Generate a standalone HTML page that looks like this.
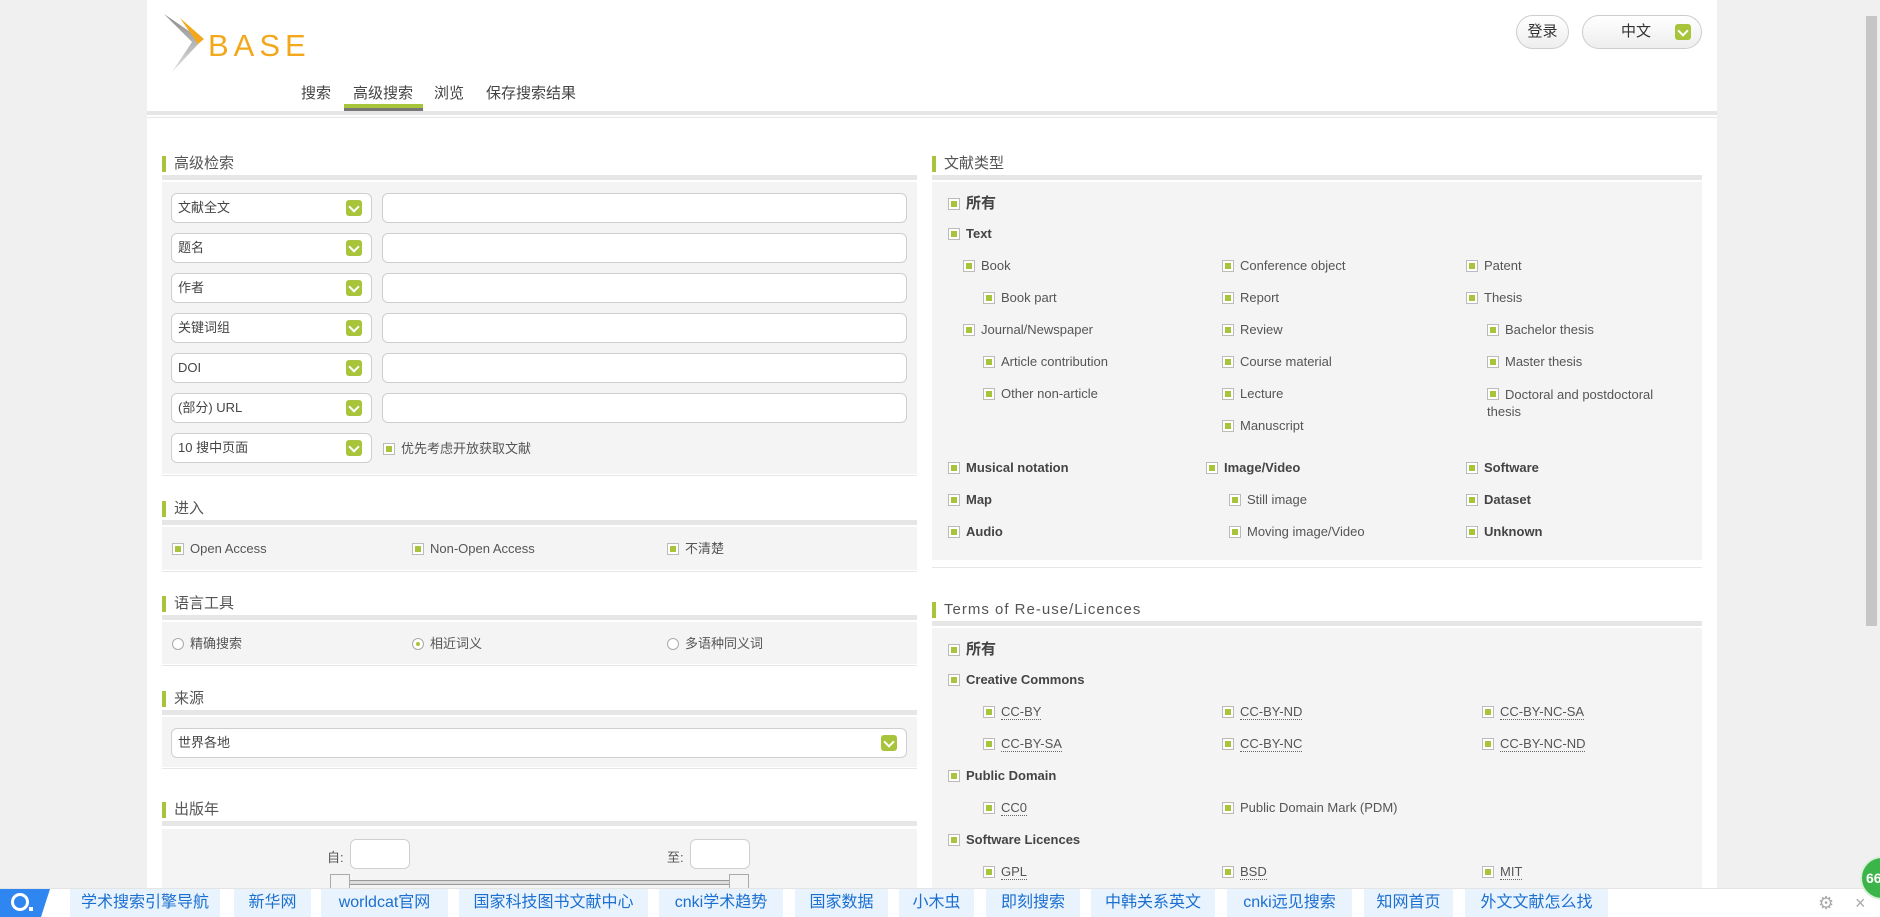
<!DOCTYPE html>
<html><head><meta charset="utf-8">
<style>
*{margin:0;padding:0;box-sizing:border-box}
body{width:1880px;height:917px;overflow:hidden;background:#f0f0f0;font-family:"Liberation Sans","Noto Sans CJK SC",sans-serif;font-size:13px;color:#555;position:relative}
.a{position:absolute}
#main{left:147px;top:0;width:1570px;height:917px;background:#fff}
.hdr{font-size:15px;color:#555;padding-left:8px;border-left:4px solid #a8c43a;line-height:16px;height:16px}
.bar{height:5px;background:#e6e6e6}
.pan{background:#f4f4f4}
.sel{background:#fff;border:1px solid #cfcfcf;border-radius:6px;height:30px;line-height:28px;padding-left:6px;font-size:13px;color:#444}
.arr{position:absolute;right:9px;top:6px;width:16px;height:16px;background:#a8c43a;border-radius:3px}
.arr:after{content:"";position:absolute;left:4px;top:3px;width:6px;height:6px;border-right:2px solid #fff;border-bottom:2px solid #fff;transform:rotate(45deg)}
.inp{background:#fff;border:1px solid #cfcfcf;border-radius:6px;height:30px}
.cb{position:absolute;width:12px;height:12px;border:1px solid #bbb;background:#fff}
.cb:after{content:"";position:absolute;left:2px;top:2px;width:6px;height:6px;background:#a8c43a}
.it{position:absolute;font-size:13px;color:#555;white-space:nowrap;line-height:16px}
.it .cb{left:0;top:2px}
.it span{margin-left:18px}
.b{font-weight:bold;color:#444}
.u span{border-bottom:1px dotted #666}
.rd{position:absolute;left:0;top:2px;width:12px;height:12px;border:1px solid #aaa;border-radius:50%;background:#fff}
.rd.on:after{content:"";position:absolute;left:3px;top:3px;width:4px;height:4px;border-radius:50%;background:#a8c43a}
.bb{position:absolute;top:889px;height:28px;background:#e9f3fd;color:#1a6fd0;font-size:16px;line-height:28px;text-align:center;white-space:nowrap}
</style></head><body>
<div id="main" class="a"></div>
<div class="a" style="left:1862px;top:0;width:18px;height:889px;background:#f0f0f0"></div>
<div class="a" style="left:1866px;top:16px;width:11px;height:610px;background:#c6c6c6"></div>
<svg class="a" style="left:162px;top:14px" width="160" height="58">
<defs><linearGradient id="g" x1="0" y1="0" x2="0" y2="1"><stop offset="0" stop-color="#8a8a8a"/><stop offset="1" stop-color="#e0e0e0"/></linearGradient></defs>
<path d="M2,0 L40,26 L10,58 L30,28 Z" fill="url(#g)"/>
<path d="M18,4 L42,25 L36,30 Z" fill="#f3a81c"/>
<text x="46" y="42" font-family="Liberation Sans,sans-serif" font-size="31" fill="#f3a81c" letter-spacing="5">BASE</text>
</svg>
<div class="a" style="left:301px;top:82px;font-size:15px;color:#444">搜索</div>
<div class="a" style="left:353px;top:82px;font-size:15px;color:#444">高级搜索</div>
<div class="a" style="left:434px;top:82px;font-size:15px;color:#444">浏览</div>
<div class="a" style="left:486px;top:82px;font-size:15px;color:#444">保存搜索结果</div>
<div class="a" style="left:344px;top:104px;width:79px;height:4px;background:#a8c43a"></div>
<div class="a" style="left:344px;top:108px;width:79px;height:3px;background:#777"></div>
<div class="a" style="left:147px;top:111px;width:1570px;height:4px;background:#e6e6e6"></div>
<div class="a" style="left:147px;top:117px;width:1570px;height:1px;background:#e6e6e6"></div>
<div class="a" style="left:1516px;top:15px;width:53px;height:34px;border:1px solid #ccc;border-radius:17px;background:linear-gradient(#fff,#eee);text-align:center;line-height:32px;font-size:15px;color:#333">登录</div>
<div class="a" style="left:1582px;top:15px;width:120px;height:34px;border:1px solid #ccc;border-radius:17px;background:linear-gradient(#fff,#eee);font-size:15px;color:#333;line-height:32px"><span style="position:absolute;left:38px">中文</span><div class="arr" style="top:8px;right:10px"></div></div>

<div class="a hdr" style="left:162px;top:156px">高级检索</div>
<div class="a bar" style="left:162px;top:175px;width:755px"></div>
<div class="a pan" style="left:162px;top:182px;width:755px;height:292px"></div>
<div class="a" style="left:162px;top:475px;width:755px;height:1px;background:#e6e6e6"></div>

<div class="a sel" style="left:171px;top:193px;width:201px">文献全文<div class="arr"></div></div><div class="a inp" style="left:382px;top:193px;width:525px"></div>
<div class="a sel" style="left:171px;top:233px;width:201px">题名<div class="arr"></div></div><div class="a inp" style="left:382px;top:233px;width:525px"></div>
<div class="a sel" style="left:171px;top:273px;width:201px">作者<div class="arr"></div></div><div class="a inp" style="left:382px;top:273px;width:525px"></div>
<div class="a sel" style="left:171px;top:313px;width:201px">关键词组<div class="arr"></div></div><div class="a inp" style="left:382px;top:313px;width:525px"></div>
<div class="a sel" style="left:171px;top:353px;width:201px">DOI<div class="arr"></div></div><div class="a inp" style="left:382px;top:353px;width:525px"></div>
<div class="a sel" style="left:171px;top:393px;width:201px">(部分) URL<div class="arr"></div></div><div class="a inp" style="left:382px;top:393px;width:525px"></div>
<div class="a sel" style="left:171px;top:433px;width:201px">10 搜中页面<div class="arr"></div></div>
<div class="it" style="left:383px;top:441px"><i class="cb"></i><span>优先考虑开放获取文献</span></div>

<div class="a hdr" style="left:162px;top:501px">进入</div>
<div class="a bar" style="left:162px;top:520px;width:755px"></div>
<div class="a pan" style="left:162px;top:527px;width:755px;height:43px"></div>
<div class="a" style="left:162px;top:571px;width:755px;height:1px;background:#e6e6e6"></div>
<div class="it" style="left:172px;top:541px"><i class="cb"></i><span>Open Access</span></div>
<div class="it" style="left:412px;top:541px"><i class="cb"></i><span>Non-Open Access</span></div>
<div class="it" style="left:667px;top:541px"><i class="cb"></i><span>不清楚</span></div>

<div class="a hdr" style="left:162px;top:596px">语言工具</div>
<div class="a bar" style="left:162px;top:615px;width:755px"></div>
<div class="a pan" style="left:162px;top:622px;width:755px;height:42px"></div>
<div class="a" style="left:162px;top:665px;width:755px;height:1px;background:#e6e6e6"></div>
<div class="it" style="left:172px;top:636px"><i class="rd"></i><span>精确搜索</span></div>
<div class="it" style="left:412px;top:636px"><i class="rd on"></i><span>相近词义</span></div>
<div class="it" style="left:667px;top:636px"><i class="rd"></i><span>多语种同义词</span></div>

<div class="a hdr" style="left:162px;top:691px">来源</div>
<div class="a bar" style="left:162px;top:710px;width:755px"></div>
<div class="a pan" style="left:162px;top:717px;width:755px;height:50px"></div>
<div class="a" style="left:162px;top:768px;width:755px;height:1px;background:#e6e6e6"></div>
<div class="a sel" style="left:171px;top:728px;width:736px">世界各地<div class="arr"></div></div>

<div class="a hdr" style="left:162px;top:802px">出版年</div>
<div class="a bar" style="left:162px;top:821px;width:755px"></div>
<div class="a pan" style="left:162px;top:829px;width:755px;height:60px"></div>
<div class="a" style="left:327px;top:847px;font-size:13px">自:</div>
<div class="a inp" style="left:350px;top:839px;width:60px;height:30px"></div>
<div class="a" style="left:667px;top:847px;font-size:13px">至:</div>
<div class="a inp" style="left:690px;top:839px;width:60px;height:30px"></div>
<div class="a" style="left:345px;top:880px;width:400px;height:5px;background:#ddd;border-top:1px solid #999;border-bottom:1px solid #999"></div>
<div class="a" style="left:330px;top:874px;width:20px;height:16px;border:1px solid #aaa;background:#f4f4f4"></div>
<div class="a" style="left:729px;top:874px;width:20px;height:16px;border:1px solid #aaa;background:#f4f4f4"></div>

<div class="a hdr" style="left:932px;top:156px">文献类型</div>
<div class="a bar" style="left:932px;top:175px;width:770px"></div>
<div class="a pan" style="left:932px;top:182px;width:770px;height:378px"></div>
<div class="a" style="left:932px;top:567px;width:770px;height:1px;background:#e6e6e6"></div>

<div class="it b" style="left:948px;top:195px;font-size:15px;line-height:18px"><i class="cb" style="top:3px"></i><span>所有</span></div>
<div class="it b" style="left:948px;top:226px"><i class="cb"></i><span>Text</span></div>
<div class="it" style="left:963px;top:258px"><i class="cb"></i><span>Book</span></div>
<div class="it" style="left:983px;top:290px"><i class="cb"></i><span>Book part</span></div>
<div class="it" style="left:963px;top:322px"><i class="cb"></i><span>Journal/Newspaper</span></div>
<div class="it" style="left:983px;top:354px"><i class="cb"></i><span>Article contribution</span></div>
<div class="it" style="left:983px;top:386px"><i class="cb"></i><span>Other non-article</span></div>
<div class="it" style="left:1222px;top:258px"><i class="cb"></i><span>Conference object</span></div>
<div class="it" style="left:1222px;top:290px"><i class="cb"></i><span>Report</span></div>
<div class="it" style="left:1222px;top:322px"><i class="cb"></i><span>Review</span></div>
<div class="it" style="left:1222px;top:354px"><i class="cb"></i><span>Course material</span></div>
<div class="it" style="left:1222px;top:386px"><i class="cb"></i><span>Lecture</span></div>
<div class="it" style="left:1222px;top:418px"><i class="cb"></i><span>Manuscript</span></div>
<div class="it" style="left:1466px;top:258px"><i class="cb"></i><span>Patent</span></div>
<div class="it" style="left:1466px;top:290px"><i class="cb"></i><span>Thesis</span></div>
<div class="it" style="left:1487px;top:322px"><i class="cb"></i><span>Bachelor thesis</span></div>
<div class="it" style="left:1487px;top:354px"><i class="cb"></i><span>Master thesis</span></div>
<div class="it" style="left:1487px;top:386px;white-space:normal;width:200px;line-height:17px"><i class="cb"></i><span>Doctoral and postdoctoral thesis</span></div>

<div class="it b" style="left:948px;top:460px"><i class="cb"></i><span>Musical notation</span></div>
<div class="it b" style="left:948px;top:492px"><i class="cb"></i><span>Map</span></div>
<div class="it b" style="left:948px;top:524px"><i class="cb"></i><span>Audio</span></div>
<div class="it b" style="left:1206px;top:460px"><i class="cb"></i><span>Image/Video</span></div>
<div class="it" style="left:1229px;top:492px"><i class="cb"></i><span>Still image</span></div>
<div class="it" style="left:1229px;top:524px"><i class="cb"></i><span>Moving image/Video</span></div>
<div class="it b" style="left:1466px;top:460px"><i class="cb"></i><span>Software</span></div>
<div class="it b" style="left:1466px;top:492px"><i class="cb"></i><span>Dataset</span></div>
<div class="it b" style="left:1466px;top:524px"><i class="cb"></i><span>Unknown</span></div>

<div class="a hdr" style="left:932px;top:602px;letter-spacing:1px">Terms of Re-use/Licences</div>
<div class="a bar" style="left:932px;top:621px;width:770px"></div>
<div class="a pan" style="left:932px;top:628px;width:770px;height:261px"></div>

<div class="it b" style="left:948px;top:641px;font-size:15px;line-height:18px"><i class="cb" style="top:3px"></i><span>所有</span></div>
<div class="it b" style="left:948px;top:672px"><i class="cb"></i><span>Creative Commons</span></div>
<div class="it u" style="left:983px;top:704px"><i class="cb"></i><span>CC-BY</span></div>
<div class="it u" style="left:983px;top:736px"><i class="cb"></i><span>CC-BY-SA</span></div>
<div class="it u" style="left:1222px;top:704px"><i class="cb"></i><span>CC-BY-ND</span></div>
<div class="it u" style="left:1222px;top:736px"><i class="cb"></i><span>CC-BY-NC</span></div>
<div class="it u" style="left:1482px;top:704px"><i class="cb"></i><span>CC-BY-NC-SA</span></div>
<div class="it u" style="left:1482px;top:736px"><i class="cb"></i><span>CC-BY-NC-ND</span></div>
<div class="it b" style="left:948px;top:768px"><i class="cb"></i><span>Public Domain</span></div>
<div class="it u" style="left:983px;top:800px"><i class="cb"></i><span>CC0</span></div>
<div class="it" style="left:1222px;top:800px"><i class="cb"></i><span>Public Domain Mark (PDM)</span></div>
<div class="it b" style="left:948px;top:832px"><i class="cb"></i><span>Software Licences</span></div>
<div class="it u" style="left:983px;top:864px"><i class="cb"></i><span>GPL</span></div>
<div class="it u" style="left:1222px;top:864px"><i class="cb"></i><span>BSD</span></div>
<div class="it u" style="left:1482px;top:864px"><i class="cb"></i><span>MIT</span></div>

<div class="a" style="left:0;top:888px;width:1880px;height:29px;background:#fff;border-top:1px solid #e4e4e4"></div>
<div class="a" style="left:0;top:889px;width:50px;height:28px;background:#2f86f0;clip-path:polygon(0 0,100% 0,82% 100%,0 100%)"></div>
<div class="a" style="left:11px;top:893px;width:18px;height:18px;border:3px solid #fff;border-radius:50%"></div>
<div class="a" style="left:29px;top:907px;width:4px;height:4px;background:#fff"></div>
<div class="bb" style="left:70px;width:150px">学术搜索引擎导航</div>
<div class="bb" style="left:234px;width:77px">新华网</div>
<div class="bb" style="left:321px;width:127px">worldcat官网</div>
<div class="bb" style="left:459px;width:189px">国家科技图书文献中心</div>
<div class="bb" style="left:659px;width:124px">cnki学术趋势</div>
<div class="bb" style="left:795px;width:93px">国家数据</div>
<div class="bb" style="left:899px;width:75px">小木虫</div>
<div class="bb" style="left:986px;width:94px">即刻搜索</div>
<div class="bb" style="left:1091px;width:124px">中韩关系英文</div>
<div class="bb" style="left:1227px;width:125px">cnki远见搜索</div>
<div class="bb" style="left:1364px;width:89px">知网首页</div>
<div class="bb" style="left:1465px;width:143px">外文文献怎么找</div>
<div class="a" style="left:1818px;top:893px;font-size:18px;color:#aaa">⚙</div>
<div class="a" style="left:1855px;top:893px;font-size:18px;color:#aaa">×</div>
<div class="a" style="left:1860px;top:856px;width:44px;height:44px;border-radius:50%;background:#3bb54a;border:2px solid #d8f0da;color:#fff;font-weight:bold;font-size:14px;line-height:40px;padding-left:4px">66</div>
</body></html>
